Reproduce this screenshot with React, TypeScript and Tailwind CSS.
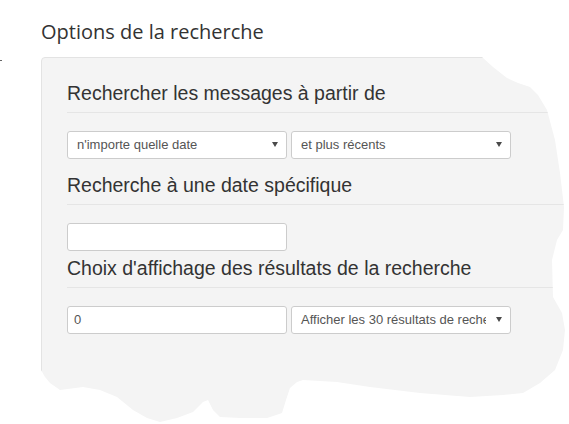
const sans = "font-['Liberation_Sans',Arial,sans-serif]";

function FakeSelect({ label }: { label: string }) {
  return (
    <div className="relative flex h-[28px] w-[220px] items-center rounded-[3px] border border-[#cccccc] bg-white">
      <span className="block w-[194px] overflow-hidden whitespace-nowrap pl-[9px] text-[13px] leading-[16px] text-[#555]">
        {label}
      </span>
      <span className="absolute right-[8px] top-[10px] h-0 w-0 border-x-[3px] border-t-[5px] border-x-transparent border-t-[#4a4a4a]" />
    </div>
  );
}

function TextBox({ value = "" }: { value?: string }) {
  return (
    <div className="flex h-[28px] w-[220px] items-center rounded-[3px] border border-[#cccccc] bg-white pl-[6px] text-[13px] leading-[16px] text-[#555]">
      {value}
    </div>
  );
}

function Legend({ children, className = "" }: { children: React.ReactNode; className?: string }) {
  return (
    <div className={`border-b border-[#e5e5e5] pb-[7px] text-[19.5px] leading-[24px] text-[#333] ${className}`}>
      {children}
    </div>
  );
}

export default function App() {
  return (
    <div className={`relative h-[424px] w-[569px] overflow-hidden bg-white ${sans}`}>
      <span className="absolute left-0 top-[60px] h-px w-[2px] bg-[#666]" />
      <h1 className="ml-[41px] pt-[18px] font-['Open_Sans',sans-serif] text-[20px] font-normal leading-[28px] text-[#333]">
        Options de la recherche
      </h1>
      <div className="ml-[41px] mt-[11px] h-[367px] w-[528px] rounded-[4px] border border-[#e3e3e3] bg-[#f4f4f4] pl-[25px] pt-[23px] [clip-path:polygon(0_0,441px_0,452px_10px,466px_21px,477px_26px,489px_30px,497px_38px,506px_53px,514px_83px,519px_116px,523px_150px,522px_173px,516px_183px,511px_203px,512px_240px,521px_256px,524px_273px,522px_293px,514px_313px,499px_326px,482px_336px,462px_338px,429px_340px,379px_336px,329px_330px,296px_325px,262px_323px,256px_325px,249px_331px,245px_343px,241px_356px,226px_361px,199px_361px,179px_360px,172px_353px,167px_343px,162px_345px,152px_355px,136px_361px,119px_365px,106px_361px,92px_353px,76px_340px,59px_333px,42px_330px,19px_333px,9px_326px,4px_320px,0_313px)]">
        <Legend>Rechercher les messages à partir de</Legend>
        <div className="mt-[18px] flex gap-[4px]">
          <FakeSelect label="n'importe quelle date" />
          <FakeSelect label="et plus récents" />
        </div>
        <Legend className="mt-[14px]">Recherche à une date spécifique</Legend>
        <div className="mt-[18px] flex">
          <TextBox />
        </div>
        <Legend className="mt-[5px]">Choix d'affichage des résultats de la recherche</Legend>
        <div className="mt-[18px] flex gap-[4px]">
          <TextBox value="0" />
          <FakeSelect label="Afficher les 30 résultats de recherche" />
        </div>
      </div>
    </div>
  );
}
